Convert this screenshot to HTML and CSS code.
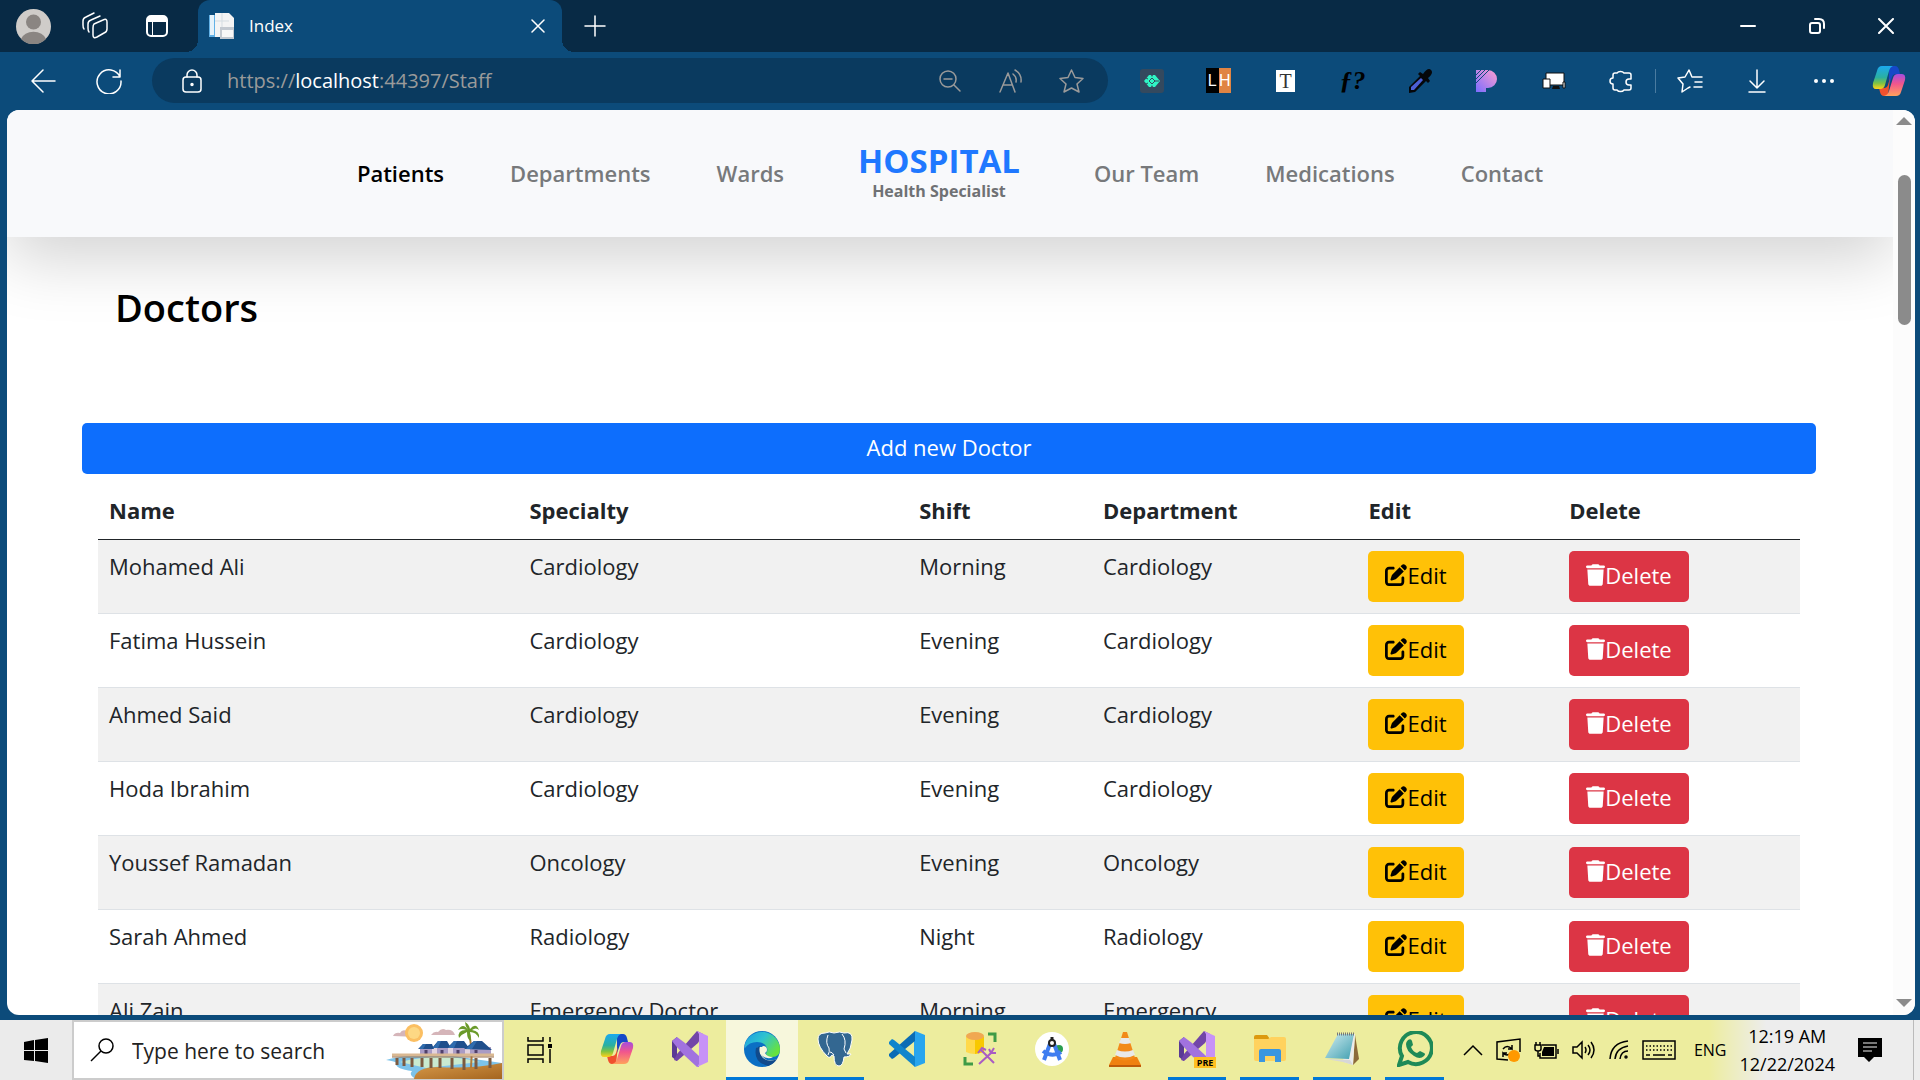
FILE: index.html
```html
<!DOCTYPE html>
<html lang="en">
<head>
<meta charset="utf-8">
<title>Index</title>
<link rel="stylesheet" href="styles.css">
</head>
<body>
<svg class="defs" aria-hidden="true">
  <defs>
    <linearGradient id="cp-a" x1="0" y1="0" x2="0" y2="1"><stop offset="0" stop-color="#1ba9f0"/><stop offset=".5" stop-color="#2bb0a0"/><stop offset=".75" stop-color="#7fc242"/><stop offset="1" stop-color="#ffd21a"/></linearGradient>
    <linearGradient id="cp-b" x1="0" y1="0" x2="0" y2="1"><stop offset="0" stop-color="#a34de0"/><stop offset=".45" stop-color="#f2568c"/><stop offset="1" stop-color="#ffa25c"/></linearGradient>
    <linearGradient id="edge-a" x1="0" y1="0" x2="1" y2=".6"><stop offset="0" stop-color="#1b9de2"/><stop offset=".5" stop-color="#2fc3d0"/><stop offset="1" stop-color="#66e23f"/></linearGradient>
    <linearGradient id="pp" x1="0" y1="1" x2="1" y2="0"><stop offset="0" stop-color="#7a6cff"/><stop offset="1" stop-color="#ff9fd0"/></linearGradient>
    <linearGradient id="np" x1="0" y1="0" x2="1" y2="1"><stop offset="0" stop-color="#d4eef2"/><stop offset="1" stop-color="#3f9fb0"/></linearGradient>
    <linearGradient id="sand" x1="0" y1="0" x2="1" y2="1"><stop offset="0" stop-color="#d79a4a"/><stop offset="1" stop-color="#a5651f"/></linearGradient>
  </defs>
  <symbol id="pen" viewBox="0 0 512 512"><path d="M471.6 21.7c-21.9-21.9-57.3-21.9-79.2 0L362.3 51.7l97.9 97.9 30.1-30.1c21.9-21.9 21.9-57.3 0-79.2L471.6 21.7zm-299.2 220c-6.1 6.1-10.8 13.6-13.5 21.9l-29.6 88.8c-2.9 8.6-.6 18.1 5.8 24.6s15.9 8.7 24.6 5.8l88.8-29.6c8.2-2.7 15.7-7.4 21.9-13.5L437.7 172.3 339.7 74.3 172.4 241.7zM96 64C43 64 0 107 0 160V416c0 53 43 96 96 96H352c53 0 96-43 96-96V320c0-17.7-14.3-32-32-32s-32 14.3-32 32v96c0 17.7-14.3 32-32 32H96c-17.7 0-32-14.3-32-32V160c0-17.7 14.3-32 32-32h96c17.7 0 32-14.3 32-32s-14.3-32-32-32H96z"/></symbol>
  <symbol id="trash" viewBox="0 0 448 512"><path d="M135.2 17.7L128 32H32C14.3 32 0 46.3 0 64S14.3 96 32 96H416c17.7 0 32-14.3 32-32s-14.3-32-32-32H320l-7.2-14.3C307.4 6.8 296.3 0 284.2 0H163.8c-12.1 0-23.2 6.8-28.6 17.7zM416 128H32L53.2 467c1.6 25.3 22.6 45 47.9 45H346.9c25.3 0 46.3-19.7 47.9-45L416 128z"/></symbol>
  <symbol id="copilot" viewBox="0 0 34 32"><path d="M17 1h6q3 0 4 4l1 4h-4q-3 0-4 3l-3 8z" fill="#1548c8"/><path d="M16 31h-4q-3 0-4-4l-1-4h5q3 0 4-3l2-7z" fill="#f0512e"/><path d="M10 1h11q-3 1-4 5l-4 14q-1 4-5 4H4q-4 0-3-6L5 6q1-5 5-5z" fill="url(#cp-a)"/><path d="M24 31H12q4-1 5-5l4-13q1-4 5-4h4q4 0 3 6l-4 12q-1 4-5 4z" fill="url(#cp-b)"/></symbol>
  <symbol id="vs" viewBox="0 0 36 36"><path d="M0 10l5-4v24l-5-4z" fill="#5a3a94"/><path d="M5 30l-3-1 3-6L25 0l6 3-5 9z" fill="#7245a8"/><path d="M0 10l5-4 8 6 14 13v11l-2 0-13-12-8-9z" fill="#a172df"/><path d="M25 0l11 5v26l-11 5 2-3V3z" fill="#c792f7"/></symbol>
</svg>

<header class="browser-top">
  <div class="tabstrip">
    <button class="slot slot-tab" aria-label="Profile"><svg width="35" height="35" viewBox="0 0 35 35"><circle cx="17.500" cy="17.500" r="17.500" fill="#cfccc9"/><circle cx="17.500" cy="13" r="7.500" fill="#8a8582"/><path d="M5 30a13 10 0 0 1 25 0 17 17 0 0 1-25 0z" fill="#8a8582"/></svg></button>
    <button class="slot slot-tab" aria-label="Workspaces"><svg class="line" width="28" height="28" viewBox="0 0 28 28"><path d="M13 12l9-4q4-2 4 2v7q0 3-3 4l-7 4q-4 2-4-2v-7q0-3 1-4z"/><path d="M8 20q-1-1-1-4v-4q0-3 3-4l9-4M3 17q-1-1-1-4V9q0-3 3-4l8-4"/></svg></button>
    <button class="slot slot-tab" aria-label="Tab actions"><svg width="24" height="24" viewBox="0 0 24 24"><rect x="2" y="2" width="20" height="20" rx="4" fill="none" stroke="#fff" stroke-width="2"/><path d="M2 3h20v5H2zM7 8h1v14H7z" fill="#fff"/></svg></button>
    <div class="tab">
      <svg width="26" height="26" viewBox="0 0 26 26"><path d="M0 2h8v22H0z" fill="#62b1e6"/><path d="M1 2h4v20H1z" fill="#e6f2fa"/><path d="M6 0h14l5 5v19H6z" fill="#f4f4f4"/><path d="M6 8h14M13 0v24" stroke="#d5dde2" fill="none"/><path d="M11 14h14v12H11z" fill="#c3c9d0"/><path d="M13 17h11v7H13z" fill="#f7f7f7"/></svg>
      <span class="tab-title">Index</span>
      <button class="tab-close" aria-label="Close tab"><svg class="line" width="14" height="14" viewBox="0 0 14 14"><path d="M1 1l12 12M13 1L1 13"/></svg></button>
    </div>
    <button class="slot slot-new" aria-label="New tab"><svg class="line" width="22" height="22" viewBox="0 0 22 22"><path d="M11 1v20M1 11h20"/></svg></button>
    <div class="window-controls">
      <button class="slot slot-win" aria-label="Minimize"><svg class="line" width="16" height="16" viewBox="0 0 16 16"><path d="M1 8h14"/></svg></button>
      <button class="slot slot-win" aria-label="Restore"><svg class="line" width="16" height="16" viewBox="0 0 16 16"><rect x="1" y="5" width="10" height="10" rx="2"/><path d="M6 1h4q5 0 5 5v4"/></svg></button>
      <button class="slot slot-win" aria-label="Close"><svg class="line" width="16" height="16" viewBox="0 0 16 16"><path d="M1 1l14 14M15 1L1 15"/></svg></button>
    </div>
  </div>
  <div class="toolbar">
    <button class="slot slot-nav" aria-label="Back"><svg class="line" width="26" height="24" viewBox="0 0 26 24"><path d="M25 12H2M13 1L2 12l11 11"/></svg></button>
    <button class="slot slot-nav" aria-label="Refresh"><svg class="line" width="26" height="26" viewBox="0 0 26 26"><path d="M24 9A12 12 0 1 0 25 13M24 2v7h-7"/></svg></button>
    <div class="address">
      <svg class="line lock" width="20" height="24" viewBox="0 0 20 24"><rect x="1" y="8" width="18" height="15" rx="3"/><path d="M5 8V6a5 5 0 0 1 10 0v2"/><circle cx="10" cy="15.500" r="1" fill="#fff"/></svg>
      <span class="url">https://<b>localhost</b>:44397/Staff</span>
      <button class="slot slot-addr" aria-label="Zoom out"><svg class="line" width="22" height="22" viewBox="0 0 22 22"><circle cx="9" cy="9" r="8"/><path d="M5 9h8M15 15l6 6"/></svg></button>
      <button class="slot slot-addr" aria-label="Read aloud"><svg class="line" width="24" height="24" viewBox="0 0 24 24"><path d="M1 23L9 4l7 19M4 16h9M14 5q4 3 3 8M16 1q7 4 6 12"/></svg></button>
      <button class="slot slot-addr" aria-label="Add to favorites"><svg class="line" width="25" height="24" viewBox="0 0 25 24"><path d="M12.500 1l3.500 7.500 8 1-6 5.500 2 8-7.500-4L5 23l2-8-6-5.500 8-1z"/></svg></button>
    </div>
    <button class="slot slot-ext" aria-label="Code extension"><svg width="24" height="24" viewBox="0 0 24 24"><rect width="24" height="24" rx="3" fill="#34495e"/><path d="M9 6L4 12l5 6h2l1-2 1 2h2l5-6-5-6h-2l-1 2-1-2z" fill="#2ff5c4"/><path d="M12 9l3 3-3 3-3-3z" fill="none" stroke="#34495e"/><path d="M15 12h4M6 9l2 1M6 15l2-1" stroke="#34495e"/></svg></button>
    <button class="slot slot-ext" aria-label="LH"><span class="lh"><span class="lh-l">L</span><span class="lh-r">H</span></span></button>
    <button class="slot slot-ext" aria-label="Text extension"><span class="tt">T</span></button>
    <button class="slot slot-ext" aria-label="Font finder"><span class="ff">ƒ?</span></button>
    <button class="slot slot-ext" aria-label="Color picker"><svg width="24" height="24" viewBox="0 0 24 24"><path d="M1 24v-6L12 7l-2-2 2-2 3 2q5-7 8-4t-3 8l2 3-2 2-2-2L7 23z" fill="#05070a"/><path d="M3 21v-3L13 9l2 2L6 21z" fill="#4b5fd6"/></svg></button>
    <button class="slot slot-ext" aria-label="Pastel extension"><svg width="22" height="22" viewBox="0 0 22 22"><path d="M0 0h12a9 9 0 0 1 0 18h-2v4H0z" fill="url(#pp)"/><path d="M0 5l5-5M0 9l9-9M0 13L13 0" stroke="#0c4b7a" stroke-width="1"/></svg></button>
    <button class="slot slot-ext" aria-label="Responsive viewer"><svg width="24" height="18" viewBox="0 0 24 18"><path d="M4 1h18v12H4z" fill="#fff" stroke="#111"/><path d="M1 7h7v9H1z" fill="#fff" stroke="#111"/><path d="M11 14h6l1 3h-8z" fill="#111"/><path d="M21 10h2v6h-2z" fill="#fff" stroke="#111"/></svg></button>
    <button class="slot slot-ext" aria-label="Extensions"><svg class="line" width="24" height="24" viewBox="0 0 24 24"><path d="M8 4a4 3 0 0 1 7 0h5q2 0 2 2v4h-2a3 3 0 0 0 0 6h2v3q0 2-2 2h-5a4 3 0 0 1-7 0H6q-2 0-2-2v-4a3 3 0 0 1 0-6V6q0-2 2-2z"/></svg></button>
    <span class="divider"></span>
    <button class="slot slot-ext" aria-label="Favorites"><svg class="line" width="26" height="24" viewBox="0 0 26 24"><path d="M16 8h9M18 13h7M17 18h8M15 8l-3-7-4 7-7 1 5 6-1 8 6-4 2-1"/></svg></button>
    <button class="slot slot-ext" aria-label="Downloads"><svg class="line" width="18" height="24" viewBox="0 0 18 24"><path d="M9 1v18M2 12l7 7 7-7M1 23h16"/></svg></button>
    <button class="slot slot-ext" aria-label="More"><svg width="22" height="6" viewBox="0 0 22 6" fill="#fff"><circle cx="3" cy="3" r="2"/><circle cx="11" cy="3" r="2"/><circle cx="19" cy="3" r="2"/></svg></button>
    <button class="slot slot-copilot" aria-label="Copilot"><svg width="34" height="32"><use href="#copilot"/></svg></button>
  </div>
</header>

<div class="viewport">
  <div class="page">
    <nav class="site-nav">
      <a class="active" href="#patients">Patients</a>
      <a href="#departments">Departments</a>
      <a href="#wards">Wards</a>
      <a class="brand" href="#home"><span class="brand-name">HOSPITAL</span><span class="brand-sub">Health Specialist</span></a>
      <a href="#team">Our Team</a>
      <a href="#medications">Medications</a>
      <a href="#contact">Contact</a>
    </nav>
    <main class="content">
      <h1>Doctors</h1>
      <a class="btn btn-add" href="#create">Add new Doctor</a>
      <div class="table-wrap">
        <table>
          <colgroup><col class="c-name"><col class="c-spec"><col class="c-shift"><col class="c-dept"><col class="c-edit"><col class="c-del"></colgroup>
          <thead><tr><th>Name</th><th>Specialty</th><th>Shift</th><th>Department</th><th>Edit</th><th>Delete</th></tr></thead>
          <tbody>
            <tr><td>Mohamed Ali</td><td>Cardiology</td><td>Morning</td><td>Cardiology</td><td><a class="btn btn-edit" href="#edit"><svg width="22" height="22"><use href="#pen"/></svg>Edit</a></td><td><a class="btn btn-del" href="#delete"><svg width="19" height="22"><use href="#trash"/></svg>Delete</a></td></tr>
            <tr><td>Fatima Hussein</td><td>Cardiology</td><td>Evening</td><td>Cardiology</td><td><a class="btn btn-edit" href="#edit"><svg width="22" height="22"><use href="#pen"/></svg>Edit</a></td><td><a class="btn btn-del" href="#delete"><svg width="19" height="22"><use href="#trash"/></svg>Delete</a></td></tr>
            <tr><td>Ahmed Said</td><td>Cardiology</td><td>Evening</td><td>Cardiology</td><td><a class="btn btn-edit" href="#edit"><svg width="22" height="22"><use href="#pen"/></svg>Edit</a></td><td><a class="btn btn-del" href="#delete"><svg width="19" height="22"><use href="#trash"/></svg>Delete</a></td></tr>
            <tr><td>Hoda Ibrahim</td><td>Cardiology</td><td>Evening</td><td>Cardiology</td><td><a class="btn btn-edit" href="#edit"><svg width="22" height="22"><use href="#pen"/></svg>Edit</a></td><td><a class="btn btn-del" href="#delete"><svg width="19" height="22"><use href="#trash"/></svg>Delete</a></td></tr>
            <tr><td>Youssef Ramadan</td><td>Oncology</td><td>Evening</td><td>Oncology</td><td><a class="btn btn-edit" href="#edit"><svg width="22" height="22"><use href="#pen"/></svg>Edit</a></td><td><a class="btn btn-del" href="#delete"><svg width="19" height="22"><use href="#trash"/></svg>Delete</a></td></tr>
            <tr><td>Sarah Ahmed</td><td>Radiology</td><td>Night</td><td>Radiology</td><td><a class="btn btn-edit" href="#edit"><svg width="22" height="22"><use href="#pen"/></svg>Edit</a></td><td><a class="btn btn-del" href="#delete"><svg width="19" height="22"><use href="#trash"/></svg>Delete</a></td></tr>
            <tr><td>Ali Zain</td><td>Emergency Doctor</td><td>Morning</td><td>Emergency</td><td><a class="btn btn-edit" href="#edit"><svg width="22" height="22"><use href="#pen"/></svg>Edit</a></td><td><a class="btn btn-del" href="#delete"><svg width="19" height="22"><use href="#trash"/></svg>Delete</a></td></tr>
          </tbody>
        </table>
      </div>
    </main>
  </div>
  <div class="scrollbar" aria-hidden="true">
    <svg width="16" height="10" viewBox="0 0 16 10"><path d="M8 1l8 8H0z" fill="#8b8b8b"/></svg>
    <div class="track"><div class="thumb"></div></div>
    <svg width="16" height="10" viewBox="0 0 16 10"><path d="M8 9l8-8H0z" fill="#8b8b8b"/></svg>
  </div>
</div>

<footer class="taskbar">
  <button class="start" aria-label="Start"><svg width="24" height="25" viewBox="0 0 24 25"><path d="M0 4l10-2v10H0zM11 2l13-2v12H11zM0 13h10v10L0 22zM11 13h13v12l-13-2z"/></svg></button>
  <label class="search">
    <svg class="ink" width="24" height="24" viewBox="0 0 24 24"><circle cx="16" cy="8" r="7"/><path d="M11 13L1 23"/></svg>
    <input type="text" placeholder="Type here to search" aria-label="Type here to search">
    <svg width="116" height="57" viewBox="0 0 116 57"><path d="M0 38q20-6 60-5l56 8v16H30q-8-4-4-8-16-2-16-7 3-2-10-4z" fill="#7cc3ea"/><path d="M14 40q40-10 80 0L40 46z" fill="#c9ead0"/><path d="M28 57q2-12 24-12 34 2 64-4v16z" fill="url(#sand)"/><path d="M7 14q2-4 7-3 2-4 7-2 4-1 5 3 6-1 6 3zM45 13q3-4 7-3 4-5 8-2 7-1 9 5z" fill="#d5b5b9"/><circle cx="28" cy="11" r="9" fill="#fbbf62"/><circle cx="28" cy="11" r="6" fill="#fdd884"/><path d="M85 46q2-22-3-38" stroke="#b07a3a" stroke-width="2" fill="none"/><path d="M82 8q-5-8-10 0 4-2 8 0-9 0-7 8 3-4 8-6 0 8 4 9 0-5-1-9 6 0 9 6 1-7-7-8 4-3 7 0-3-8-9-1-1-5-5-7 0 4 3 8z" fill="#6a9a2a"/><path d="M34 25h71v8H34z" fill="#a99bc4"/><path d="M46 26h5v7h-5zM62 26h5v7h-5zM79 26h5v7h-5z" fill="#e3d3df"/><path d="M32 27l5-5h9l2 5zM46 26l6-7h9l4 7zM61 26l7-7h10l5 7zM78 27l10-8h8l10 9z" fill="#1f4f8c"/><path d="M37 22h3l-3 5h-4zM52 19h3l-3 7h-5zM68 19h3l-3 7h-6zM88 19h3l-5 8h-6z" fill="#2f6cae"/><path d="M40 28v5M56 28v5M72 28v5M90 28v3" stroke="#50406a" stroke-width="3"/><path d="M6 33h102" stroke="#d9b892" stroke-width="3"/><path d="M6 35h102" stroke="#9c7350"/><path d="M11 36v7M18 36v8M26 36v9M36 36v9M45 36v10M54 36v10M66 36v11M78 36v12M90 36v11M104 36v10" stroke="#7b5a40" stroke-width="3"/></svg>
  </label>
  <button class="slot slot-task" aria-label="Task view"><svg class="ink" width="26" height="26" viewBox="0 0 26 26"><path d="M1 0v4h15V0M1 26v-4h15v4M1 8h15v10H1zM23 0v5M23 12v14"/><path d="M21 7h4v4h-4z" fill="#000" stroke="none"/></svg></button>
  <div class="apps">
    <button class="app" aria-label="Copilot"><svg width="34" height="32"><use href="#copilot"/></svg></button>
    <button class="app" aria-label="Visual Studio"><svg width="36" height="36"><use href="#vs"/></svg></button>
    <button class="app current" aria-label="Edge"><svg width="36" height="36" viewBox="0 0 36 36"><circle cx="18" cy="18" r="18" fill="#0b6fc4"/><path d="M1 13A18 18 0 0 1 36 18q0 8-8 8-6 0-6-4 2-2 1-5-2-6-10-6-8 0-12 6z" fill="url(#edge-a)"/><path d="M14 16q-4 5 0 11 6 8 18 3l1-2q-9 4-14-2-4-5 0-10z" fill="#f6f6dc"/><path d="M12 17q-3 14 12 18 6-2 9-7-8 4-14-1-5-5-3-12z" fill="#114a8b"/><path d="M19 15q4 0 4 4 0 2-2 3 2 4 8 4l-2 1q-8 1-11-5 0-5 3-7z" fill="#f6f6dc"/></svg></button>
    <button class="app running" aria-label="PostgreSQL"><svg width="36" height="36" viewBox="0 0 36 36"><path d="M8 2q4-2 9 0 6-2 10 0 9-2 8 7-1 9-5 14h4q-1 3-7 3-1 9-5 9-5 0-5-10l-2-1q-2 4-5 1Q1 16 1 8q0-6 7-6z" fill="#336791" stroke="#fff"/><path d="M11 4q-3 8 1 13 1 4-1 7M25 3q5 6 2 15l2 4M17 24q-2-3-4-3" stroke="#fff" fill="none" stroke-width="1"/></svg></button>
    <button class="app" aria-label="VS Code"><svg width="36" height="36" viewBox="0 0 36 36"><path d="M26 0l10 4v28l-10 4-1-3V4z" fill="#28a5ee"/><path d="M26 0v10L5 27l-2 1-3-3v-2z" fill="#0a6cb5"/><path d="M26 36V26L5 9 3 8l-3 3v2z" fill="#1085cc"/></svg></button>
    <button class="app" aria-label="Database tools"><svg width="34" height="34" viewBox="0 0 34 34"><path d="M3 4v16q8 4 18 0V4z" fill="#ffd94a"/><path d="M12 5h9v15l-9 2z" fill="#f8c800"/><ellipse cx="12" cy="4" rx="9" ry="4" fill="#f0a852"/><path d="M25 2h7v8M2 25v7h8" fill="none" stroke="#3f9b46" stroke-width="3"/><path d="M15 21l4-5 4 2M18 18l13 13M31 16l-3 5-12 11M26 17l2 4 5 0" fill="none" stroke="#a95cc4" stroke-width="2"/></svg></button>
    <button class="app" aria-label="Android Studio"><svg width="34" height="34" viewBox="0 0 34 34"><circle cx="17" cy="17" r="17" fill="#fff"/><circle cx="24" cy="17" r="4" fill="#2a9d50"/><path d="M16 9l-7 19M18 9l7 19M8 19q9 7 18 1" stroke="#3f7df0" stroke-width="4" fill="none"/><path d="M17 5v3" stroke="#222" stroke-width="3"/><circle cx="17" cy="11" r="3" fill="#fff" stroke="#222" stroke-width="2"/></svg></button>
    <button class="app" aria-label="VLC"><svg width="32" height="36" viewBox="0 0 32 36"><path d="M4 26h24l4 8v1H0v-1z" fill="#f08010"/><path d="M14 1h4l8 26q-10 5-20 0z" fill="#f28a1a"/><path d="M12 7h8l2 5q-6 2-12 0zM8 19q8 3 16 0l2 5q-10 5-20 0z" fill="#e9e9e9"/><path d="M0 34h32v2H0z" fill="#c05a08"/></svg></button>
    <button class="app running" aria-label="Visual Studio Preview"><svg width="36" height="36"><use href="#vs"/></svg><span class="pre">PRE</span></button>
    <button class="app running" aria-label="File Explorer"><svg width="32" height="28" viewBox="0 0 32 28"><path d="M0 2q0-2 2-2h11l3 4H0z" fill="#dc9a10"/><path d="M0 4h14l3-2h13q2 0 2 2v20q0 2-2 2H2q-2 0-2-2z" fill="#ffd25e"/><path d="M5 27V16q0-2 2-2h18q2 0 2 2v11h-6v-6H11v6z" fill="#3a96e0"/></svg></button>
    <button class="app running" aria-label="Notepad"><svg width="34" height="34" viewBox="0 0 34 34"><path d="M30 3l4 24-6 6z" fill="#8c6a3a"/><path d="M13 2h17l-2 31-9-3z" fill="#ececec"/><path d="M13 2h16l-5 25-24-1z" fill="url(#np)"/><path d="M1 27l24 1 3 5-10-3z" fill="#d7d7d7"/><path d="M12 2h18" stroke="#777" stroke-width="3" stroke-dasharray="1 1"/></svg></button>
    <button class="app running" aria-label="WhatsApp"><svg width="36" height="36" viewBox="0 0 36 36"><path d="M2 34l3-9a16 16 0 1 1 6 6z" fill="none" stroke="#1e8a57" stroke-width="4"/><path d="M11 9q3-2 4 1l1 4-2 2q2 5 6 6l3-2 4 2q2 1 0 3-4 4-10 0-8-5-8-12 0-2 2-4z" fill="#1e8a57"/></svg></button>
  </div>
  <div class="tray">
    <svg class="ink" width="20" height="12" viewBox="0 0 20 12"><path d="M1 11l9-9 9 9"/></svg>
    <svg class="ink" width="25" height="25" viewBox="0 0 25 25"><path d="M12 22l-11-1V4l23-3v13M7 11q4-5 9 0V7M16 11h-4M15 15q-4 4-8 0v4M7 15h4"/><circle cx="18" cy="18" r="6" fill="#f90" stroke="none"/></svg>
    <svg class="ink" width="25" height="18" viewBox="0 0 25 18"><path d="M8 4h14v13H6v-5M24 8v5M1 4h6v4q0 2-3 2t-3-2zM2 1v3M6 1v3M4 10v5h2"/><path d="M10 6h10v9H8v-4z" fill="#000" stroke="none"/></svg>
    <svg class="ink" width="24" height="20" viewBox="0 0 24 20"><path d="M1 7h4l5-5v16l-5-5H1zM13 7q2 3 0 6M16 5q4 5 0 10M19 2q6 8 0 16"/></svg>
    <svg class="ink" width="20" height="20" viewBox="0 0 20 20"><path d="M1 19Q2 3 19 1M6 19Q7 8 19 6M11 19q1-8 8-8"/><circle cx="17" cy="17" r="1"/></svg>
    <svg class="ink" width="34" height="20" viewBox="0 0 34 20"><rect x="1" y="1" width="32" height="18"/><path d="M4 6h26M4 10h26" stroke-dasharray="1.500 2"/><path d="M4 15h4M11 15h12M26 15h4"/></svg>
    <span class="lang">ENG</span>
    <time class="clock"><span>12:19 AM</span><span>12/22/2024</span></time>
    <button class="notif" aria-label="Notifications"><svg width="24" height="24" viewBox="0 0 24 24"><path d="M0 0h24v19h-8l-5 5-5-5H0z"/><path d="M5 5h14M5 9h14M5 13h9" stroke="#eee" stroke-width="1"/></svg></button>
  </div>
</footer>
</body>
</html>
```
FILE: styles.css
```css
* { box-sizing: border-box; }

body {
  margin: 0;
  height: 100vh;
  display: flex;
  flex-direction: column;
  overflow: hidden;
  background: #0c4b7a;
  font-family: "Open Sans", "Noto Sans", sans-serif;
  color: #212529;
}

a { text-decoration: none; color: inherit; }
svg { display: block; flex: none; }
.defs { position: absolute; width: 0; height: 0; }

button {
  margin: 0;
  padding: 0;
  border: 0;
  background: none;
  font: inherit;
  color: inherit;
}

.line { fill: none; stroke: #fff; stroke-width: 1.5; stroke-linecap: round; stroke-linejoin: round; }
.ink { fill: none; stroke: #000; stroke-width: 1.5; }
.window-controls .line { stroke-width: 2; }

.slot { display: flex; align-items: center; justify-content: center; flex: none; }
.slot-tab { width: 62px; }
.slot-new { width: 66px; }
.slot-win { width: 69px; }
.slot-nav { width: 66px; }
.slot-addr { width: 61px; }
.slot-ext { width: 67px; }
.slot-copilot { width: 63px; }
.slot-task { width: 72px; }

/* Tab strip */
.tabstrip { display: flex; height: 52px; padding-left: 2px; background: #082a45; }
.tab {
  position: relative;
  display: flex;
  align-items: center;
  gap: 14px;
  width: 364px;
  margin-left: 10px;
  padding: 0 17px 0 11px;
  border-radius: 12px 12px 0 0;
  background: #0c4b7a;
}
.tab::before,
.tab::after {
  content: "";
  position: absolute;
  bottom: 0;
  width: 12px;
  height: 12px;
}
.tab::before { right: 100%; background: radial-gradient(circle at 0 0, transparent 12px, #0c4b7a 12px); }
.tab::after { left: 100%; background: radial-gradient(circle at 100% 0, transparent 12px, #0c4b7a 12px); }
.tab-title { flex: 1; padding-bottom: 2px; font-size: 17px; color: #fff; }
.window-controls { display: flex; margin-left: auto; }

/* Toolbar */
.toolbar { display: flex; align-items: center; height: 58px; padding: 0 0 1px 10px; }
.address {
  flex: 1;
  display: flex;
  align-items: center;
  height: 45px;
  margin: 0 10px;
  padding: 0 6px 0 30px;
  border-radius: 23px;
  background: #0a3a5f;
}
.address .slot .line { stroke: #9a9a9a; }
.url { flex: 1; margin-left: 25px; font-size: 20px; color: #9a9a9a; }
.url b { font-weight: 400; color: #fff; }
.divider { width: 1px; height: 24px; margin-left: 1px; background: #4a7ba0; }

.lh { display: flex; width: 25px; height: 25px; font: 16px/25px "Liberation Sans", sans-serif; color: #fff; }
.lh-l, .lh-r { flex: 1; text-align: center; }
.lh-l { background: #000; }
.lh-r { background: #e08443; }
.tt { width: 19px; height: 22px; background: #fff; font: 20px/22px "Liberation Serif", serif; color: #333; }
.ff { font: italic 700 26px/26px "Liberation Serif", serif; color: #000; }

/* Web page area */
.viewport {
  flex: 1;
  min-height: 0;
  display: flex;
  margin: 0 5px 5px 7px;
  border-radius: 12px;
  overflow: hidden;
  background: #fff;
}
.page { flex: 1; overflow: hidden; }

.site-nav {
  display: flex;
  align-items: center;
  justify-content: center;
  gap: 66px;
  height: 127px;
  padding-bottom: 2px;
  background: #f8f9fb;
  box-shadow: 0 22px 65px rgba(0, 0, 0, 0.175);
  font-size: 22px;
  font-weight: 600;
  color: #77797b;
}
.site-nav .active { color: #000; }
.brand { display: flex; flex-direction: column; align-items: center; margin: 0 8px; font-weight: 700; }
.brand-name { font-size: 33px; line-height: 36px; color: #1f78ff; }
.brand-sub { font-size: 16px; line-height: 24px; color: #6f7174; }

.content { display: flex; flex-direction: column; padding: 40px 77px 0 75px; }
h1 { margin: 0 33px 86px; font-size: 38px; line-height: 60px; font-weight: 600; color: #000; }

.btn {
  display: inline-flex;
  align-items: center;
  justify-content: center;
  height: 51px;
  padding: 0 17px 3px;
  border-radius: 5px;
  font-size: 22px;
  fill: currentColor;
}
.btn-add { background: #0d6efd; color: #fff; }
.btn-edit { background: #ffc107; color: #000; }
.btn-del { background: #dc3545; color: #fff; }

.table-wrap { padding: 10px 16px; }
table { width: 100%; table-layout: fixed; border-collapse: separate; border-spacing: 0; font-size: 22px; line-height: 30px; }
.c-name { width: 24.7%; }
.c-spec { width: 22.9%; }
.c-shift { width: 10.8%; }
.c-dept { width: 15.6%; }
.c-edit { width: 11.8%; }
.c-del { width: 14.2%; }
th, td { padding: 11px 11px 0; text-align: left; vertical-align: top; }
th { height: 56px; border-bottom: 1px solid #212529; font-weight: 700; }
td { height: 74px; border-bottom: 1px solid #dee2e6; }
tbody tr:nth-child(odd) { background: #f1f1f1; }
td .btn { vertical-align: top; }

.scrollbar {
  display: flex;
  flex-direction: column;
  align-items: center;
  width: 22px;
  padding: 6px 0 7px;
  background: #fcfcfc;
}
.track { flex: 1; padding-top: 49px; }
.thumb { width: 13px; height: 150px; border-radius: 7px; background: #8b8b8b; }

/* Taskbar */
.taskbar {
  display: flex;
  height: 60px;
  padding-right: 6px;
  background: linear-gradient(90deg, #ebebeb 0 504px, #eded9e 504px 89%, #ededed 92%);
  color: #000;
}
.start { display: flex; align-items: center; justify-content: center; width: 72px; }
.search {
  display: flex;
  align-items: center;
  width: 432px;
  padding-left: 16px;
  border: 2px solid #ccc;
  background: #fff;
}
.search input {
  flex: 1;
  min-width: 0;
  margin-left: 18px;
  padding: 2px 0 0;
  border: 0;
  outline: 0;
  font: 21px "Open Sans", "Noto Sans", sans-serif;
}
.search input::placeholder { color: #222; opacity: 1; }

.apps { flex: 1; display: grid; grid-template-columns: repeat(12, 1fr); margin-left: 5px; }
.app { position: relative; display: flex; align-items: center; justify-content: center; border-bottom: 3px solid transparent; }
.running { margin: 0 7px; border-color: #0078d7; }
.current { background: #f7f7dc; border-color: #0078d7; }
.pre {
  position: absolute;
  right: 10px;
  bottom: 9px;
  padding: 0 3px;
  background: #ffc020;
  font: 700 9px/11px "Open Sans", sans-serif;
}

.tray { display: flex; align-items: center; gap: 13px; padding-left: 12px; border-right: 1px solid #bbb; }
.lang { margin-left: 5px; font-size: 16px; }
.clock { display: flex; flex-direction: column; align-items: center; font-size: 18px; line-height: 28px; }
.notif { margin: 0 31px 0 10px; }
```
